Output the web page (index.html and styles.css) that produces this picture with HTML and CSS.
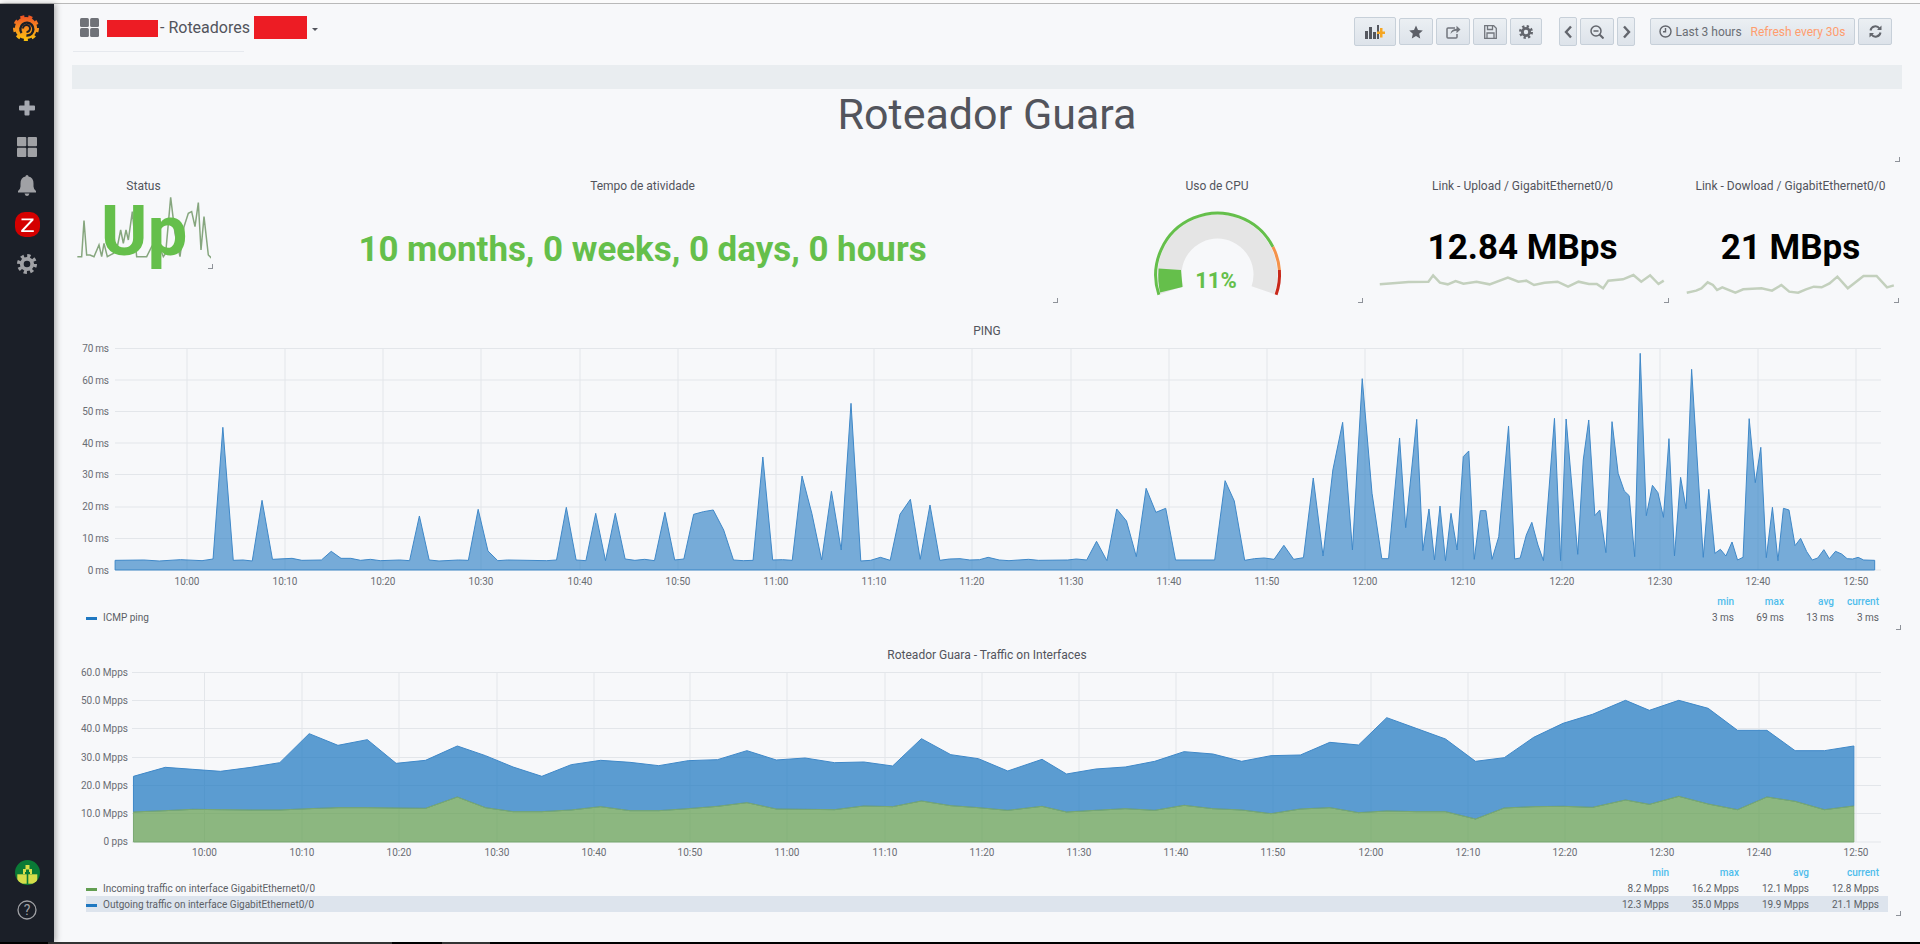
FILE: index.html
```html
<!DOCTYPE html>
<html lang="pt">
<head>
    <meta charset="UTF-8">
    <title>Roteadores - Grafana</title>
    <link rel="stylesheet" href="styles.css">
</head>
<body>

<div class="topline"></div>

<div class="layout">
    <!-- Menu lateral -->
    <aside class="sidemenu">
        <div class="side-logo">
            <svg width="26" height="28" viewBox="0 0 26 28">
                <defs>
                    <linearGradient id="logo-grad" gradientUnits="userSpaceOnUse" x1="0" y1="0" x2="0" y2="28">
                        <stop offset="0" stop-color="#ef4b26"/>
                        <stop offset=".55" stop-color="#f7931e"/>
                        <stop offset="1" stop-color="#fcc80c"/>
                    </linearGradient>
                    <clipPath id="avatar-clip"><circle cx="12.500" cy="12.500" r="12.500"/></clipPath>
                </defs>
                <circle cx="13" cy="14" r="11" fill="url(#logo-grad)"/>
                <circle cx="13" cy="14" r="11.500" fill="none" stroke="url(#logo-grad)" stroke-width="3" stroke-dasharray="4 4.030"/>
                <path d="M8.600 19a6.500 6.500 0 1 1 9.800 .8a6.500 6.500 0 0 1-5 1.700" fill="none" stroke="#1b1f28" stroke-width="2.400"/>
                <path d="M10 14.500a3.500 3.500 0 1 1 3.500 3.500" fill="none" stroke="#1b1f28" stroke-width="2"/>
            </svg>
        </div>
        <div class="side-item">
            <svg width="18" height="16" viewBox="0 0 18 16"><path d="M6.500 1.500q0-1 1-1h3q1 0 1 1v4h4.500q1 0 1 1v3q0 1-1 1h-4.500v4q0 1-1 1h-3q-1 0-1-1v-4h-4.500q-1 0-1-1v-3q0-1 1-1h4.500z" fill="#a5a8b0"/></svg>
        </div>
        <div class="side-item">
            <svg width="20" height="20" viewBox="0 0 20 20" fill="#a0a1a5"><rect x="0" y="0" width="9.300" height="9.300" rx="1"/><rect x="10.700" y="0" width="9.300" height="9.300" rx="1"/><rect x="0" y="10.700" width="9.300" height="9.300" rx="1"/><rect x="10.700" y="10.700" width="9.300" height="9.300" rx="1"/></svg>
        </div>
        <div class="side-item">
            <svg width="18" height="21" viewBox="0 0 18 21" fill="#a0a1a5"><path d="M9 0q1.500 0 1.500 1.500q5 1 5 7v3q0 2.500 2.500 4.500v1.500h-18v-1.500q2.500-2 2.500-4.500v-3q0-6 5-7q0-1.500 1.500-1.500z"/><path d="M6.500 18.500h5q-.8 2.500-2.500 2.500t-2.500-2.500z"/></svg>
        </div>
        <div class="side-item">
            <svg width="25" height="25" viewBox="0 0 25 25"><rect width="25" height="25" rx="10" fill="#d40000"/><path d="M6.500 6.500h12v1.700l-9.500 10h9.800v1.800h-12.600v-1.700l9.500-10h-9.200z" fill="#fff"/></svg>
        </div>
        <div class="side-item">
            <svg width="20" height="20" viewBox="0 0 20 20" fill="none" stroke="#a0a1a5"><circle cx="10" cy="10" r="5.200" stroke-width="3.800"/><circle cx="10" cy="10" r="8" stroke-width="4" stroke-dasharray="3.140 3.140"/></svg>
        </div>
        <div class="side-bottom">
            <div class="side-item">
                <svg width="25" height="25" viewBox="0 0 25 25">
                    <circle cx="12.500" cy="12.500" r="12.500" fill="#0a7a36"/>
                    <g clip-path="url(#avatar-clip)">
                        <path d="M10.500 5h4v4h2.500v5h-2v-2h-5v2h-2v-5h2.500z" fill="#d6dd4a"/>
                        <rect x="11" y="9.500" width="3" height="2.500" fill="#0a7a36"/>
                        <rect x="2.300" y="14.300" width="9.400" height="9.400" fill="#d6dd4a"/>
                        <rect x="13.300" y="14.300" width="9" height="9.400" fill="#d6dd4a"/>
                    </g>
                </svg>
            </div>
            <div class="side-item">
                <svg width="20" height="20" viewBox="0 0 20 20"><circle cx="10" cy="10" r="9" fill="none" stroke="#a0a1a5" stroke-width="1.300"/><text x="10" y="14.500" class="help-mark">?</text></svg>
            </div>
        </div>
    </aside>

    <main class="main">
        <!-- Barra superior -->
        <header class="navbar">
            <div class="nav-title">
                <svg class="nav-icon" width="19" height="19" viewBox="0 0 19 19" fill="#6f7278"><rect width="8.900" height="8.900" rx="1.500"/><rect x="10.100" width="8.900" height="8.900" rx="1.500"/><rect y="10.100" width="8.900" height="8.900" rx="1.500"/><rect x="10.100" y="10.100" width="8.900" height="8.900" rx="1.500"/></svg>
                <span class="redact redact-a"></span>
                <span class="nav-text">- Roteadores</span>
                <span class="redact redact-b"></span>
                <span class="nav-caret"></span>
            </div>
            <div class="toolbar">
                <button class="btn btn-add">
                    <svg width="20" height="14" viewBox="0 0 20 14"><g fill="#55585f"><rect x="0" y="6" width="3" height="8"/><rect x="4" y="2" width="3" height="12"/><rect x="8" y="7" width="3" height="7"/><rect x="12" y="0" width="2" height="14"/></g><path d="M15 3h2.500v3.500h3v2.500h-3v3.500h-2.500v-3.500h-3v-2.500h3z" fill="#f5a623"/></svg>
                </button>
                <button class="btn btn-sq">
                    <svg width="14" height="14" viewBox="0 0 14 14"><path d="M7 .5l2 4.500 4.800.5-3.600 3.200 1 4.800-4.200-2.500-4.200 2.500 1-4.800-3.600-3.200 4.800-.5z" fill="#5d6068"/></svg>
                </button>
                <button class="btn btn-sq">
                    <svg width="15" height="14" viewBox="0 0 15 14" fill="none" stroke="#72767d" stroke-width="1.500"><path d="M9 3h-7q-1 0-1 1v8q0 1 1 1h8q1 0 1-1v-3"/><path d="M4.500 9q.5-5 6-5.200v-3l4 3.700-4 3.700v-2.500q-3.500 0-6 3.300z" fill="#72767d" stroke="none"/></svg>
                </button>
                <button class="btn btn-sq">
                    <svg width="13" height="14" viewBox="0 0 13 14" fill="none" stroke="#72767d" stroke-width="1.300"><path d="M.7.700h9l2.600 2.600v10h-11.600z"/><path d="M3.500 1v3.500h5v-3.500"/><path d="M3 13v-5h7v5"/></svg>
                </button>
                <button class="btn btn-sq btn-gear">
                    <svg width="14" height="14" viewBox="0 0 20 20" fill="none" stroke="#63666d"><circle cx="10" cy="10" r="5.200" stroke-width="4"/><circle cx="10" cy="10" r="8" stroke-width="4" stroke-dasharray="3.140 3.140"/></svg>
                </button>
                <button class="btn btn-arrow">
                    <svg width="9" height="14" viewBox="0 0 9 14"><path d="M7 1.500l-5 5.500 5 5.500" fill="none" stroke="#63666d" stroke-width="2.400"/></svg>
                </button>
                <button class="btn btn-sq">
                    <svg width="14" height="14" viewBox="0 0 14 14" fill="none" stroke="#63666d" stroke-width="1.500"><circle cx="6" cy="6" r="5"/><path d="M9.500 9.500l4 4" stroke-width="2"/><path d="M3.500 6h5"/></svg>
                </button>
                <button class="btn btn-arrow btn-next">
                    <svg width="9" height="14" viewBox="0 0 9 14"><path d="M2 1.500l5 5.500-5 5.500" fill="none" stroke="#63666d" stroke-width="2.400"/></svg>
                </button>
                <button class="btn btn-time">
                    <svg width="13" height="13" viewBox="0 0 13 13" fill="none" stroke="#63666d" stroke-width="1.400"><circle cx="6.500" cy="6.500" r="5.500"/><path d="M6.500 3v3.800h-2.500"/></svg>
                    <span class="time-range">Last 3 hours</span>
                    <span class="time-refresh">Refresh every 30s</span>
                </button>
                <button class="btn btn-sq btn-refresh">
                    <svg width="13" height="13" viewBox="0 0 13 13" fill="none" stroke="#63666d" stroke-width="2"><path d="M1.500 5.500a5 5 0 0 1 9-2"/><path d="M11.500 7.500a5 5 0 0 1-9 2"/><path d="M12.500 .5v4.500h-4.500z" fill="#63666d" stroke="none"/><path d="M.5 12.500v-4.500h4.500z" fill="#63666d" stroke="none"/></svg>
                </button>
            </div>
        </header>

        <div class="row-bar"></div>

        <div class="title-panel">
            <h1>Roteador Guara</h1>
            <span class="handle"></span>
        </div>

        <!-- Paineis de status -->
        <section class="stats">
            <div class="stat stat-status">
                <svg class="spark" viewBox="76 176 135 127">
                    <g transform="scale(.33333)">
                        <polyline class="spark-line spark-status" points="232,770 245,770 252,662 260,765 270,765 282,770 297,735 305,770 312,730 322,770 340,760 352,740 362,690 370,730 378,690 385,720 397,635 410,770 440,770 455,740 470,720 490,770 497,760 512,592 525,700 540,770 552,680 565,640 575,635 585,680 595,608 603,750 612,650 625,765 635,775"/>
                    </g>
                </svg>
                <div class="stat-title">Status</div>
                <div class="stat-up">Up</div>
                <span class="handle"></span>
            </div>
            <div class="stat stat-uptime">
                <div class="stat-title">Tempo de atividade</div>
                <div class="stat-value green">10 months, 0 weeks, 0 days, 0 hours</div>
                <span class="handle"></span>
            </div>
            <div class="stat stat-cpu">
                <div class="stat-title">Uso de CPU</div>
                <svg class="gauge" width="135" height="95" viewBox="1150 205 135 95">
                    <path d="M1172.100 290.200A48 48 0 1 1 1262.900 290.200" fill="none" stroke="#e5e5e5" stroke-width="24"/>
                    <path d="M1158.900 294.800A62 62 0 0 1 1272.900 246.900" fill="none" stroke="#65bf4b" stroke-width="3"/>
                    <path d="M1272.900 246.900A62 62 0 0 1 1279.400 270" fill="none" stroke="#f4924a" stroke-width="3"/>
                    <path d="M1279.400 270A62 62 0 0 1 1276.100 294.800" fill="none" stroke="#c8281a" stroke-width="3"/>
                    <path d="M1160 292.500L1182.500 287L1181 270L1158.600 268.500Q1157.500 281 1160 292.500z" fill="#65bf4b"/>
                    <text x="1216" y="288" class="gauge-text">11%</text>
                </svg>
                <span class="handle"></span>
            </div>
            <div class="stat stat-upload">
                <svg class="spark" viewBox="1379 176 287 127">
                    <g transform="translate(1100 170) scale(.52295 .33333)">
                        <polyline class="spark-line" points="535,343 560,340 590,336 628,335 637,316 650,338 665,343 680,333 695,341 720,335 745,343 780,323 800,335 815,332 830,345 850,338 875,335 895,350 915,335 935,342 950,342 962,355 972,332 1000,328 1020,315 1035,335 1052,316 1068,342 1078,332"/>
                    </g>
                </svg>
                <div class="stat-title">Link - Upload / GigabitEthernet0/0</div>
                <div class="stat-value black">12.84 MBps</div>
                <span class="handle"></span>
            </div>
            <div class="stat stat-download">
                <svg class="spark" viewBox="1685 176 211 127">
                    <g transform="translate(1100 170) scale(.52295 .33333)">
                        <polyline class="spark-line" points="1122,368 1140,362 1150,355 1162,337 1172,345 1180,360 1190,352 1215,368 1230,358 1265,355 1285,362 1303,345 1318,365 1335,368 1350,358 1365,350 1380,352 1395,340 1410,320 1430,355 1460,318 1485,318 1505,352 1518,346"/>
                    </g>
                </svg>
                <div class="stat-title">Link - Dowload / GigabitEthernet0/0</div>
                <div class="stat-value black">21 MBps</div>
                <span class="handle"></span>
            </div>
        </section>

        <!-- Grafico de ping -->
        <section class="graph graph-ping">
            <div class="graph-title">PING</div>
            <svg class="chart" width="1822" height="252" viewBox="76 340 1822 252">
                <g class="grid">
                    <path d="M115 348.500H1881M115 380H1881M115 411.500H1881M115 443H1881M115 474.500H1881M115 507H1881M115 538.500H1881M115 570H1881"/>
                    <path d="M187 348V570M285 348V570M383 348V570M481 348V570M580 348V570M678 348V570M776 348V570M874 348V570M972 348V570M1071 348V570M1169 348V570M1267 348V570M1365 348V570M1463 348V570M1562 348V570M1660 348V570M1758 348V570M1856 348V570"/>
                </g>
                <g transform="translate(0 320) scale(.61224 .33333)">
                    <polygon class="area-ping" points="188,750 188,721 235,720 260,723 295,719 330,722 348,717 364,322 381,721 397,720 412,723 428,541 445,718 477,715 493,721 525,720 541,694 557,715 573,715 589,721 605,718 621,722 653,720 669,722 685,588 701,720 717,723 749,720 765,721 781,568 797,693 813,722 829,720 893,722 909,720 925,562 941,720 957,722 973,580 989,722 1005,580 1021,717 1037,721 1053,718 1069,722 1086,577 1102,720 1117,717 1133,583 1149,575 1165,570 1182,630 1198,720 1214,722 1230,721 1246,411 1262,720 1278,719 1294,721 1310,468 1326,580 1342,720 1358,514 1374,690 1390,250 1406,723 1422,721 1438,712 1454,721 1470,583 1487,538 1503,718 1519,555 1535,721 1551,717 1568,716 1584,720 1600,719 1614,712 1632,720 1648,722 1680,718 1696,721 1744,720 1758,717 1775,720 1791,664 1808,722 1824,567 1840,603 1856,710 1872,505 1888,577 1904,565 1920,720 1984,720 2001,482 2016,543 2033,721 2049,716 2065,714 2081,718 2097,676 2113,718 2129,713 2145,474 2161,708 2177,450 2193,307 2209,690 2225,176 2241,520 2257,716 2268,716 2286,354 2296,623 2314,298 2324,692 2334,567 2343,720 2352,558 2361,722 2370,580 2380,690 2390,410 2399,393 2408,718 2418,572 2427,572 2437,718 2448,650 2464,318 2474,717 2483,714 2493,645 2502,607 2512,675 2521,722 2539,295 2549,722 2558,297 2577,703 2586,420 2595,300 2605,587 2613,570 2623,698 2633,305 2643,460 2653,513 2661,527 2670,710 2679,100 2689,587 2699,496 2708,518 2717,592 2726,356 2735,708 2745,472 2754,566 2763,148 2782,712 2791,508 2801,700 2810,688 2819,708 2829,666 2838,720 2847,712 2857,296 2867,488 2876,382 2885,713 2895,562 2904,722 2913,565 2922,570 2932,677 2941,655 2951,695 2960,720 2969,714 2979,689 2988,716 2998,694 3008,702 3017,716 3026,717 3035,712 3044,720 3062,721 3062,750"/>
                </g>
                <g class="y-labels">
                    <text x="108.500" y="352">70 ms</text>
                    <text x="108.500" y="383.500">60 ms</text>
                    <text x="108.500" y="415">50 ms</text>
                    <text x="108.500" y="446.500">40 ms</text>
                    <text x="108.500" y="478">30 ms</text>
                    <text x="108.500" y="510">20 ms</text>
                    <text x="108.500" y="542">10 ms</text>
                    <text x="108.500" y="573.500">0 ms</text>
                </g>
                <g class="x-labels">
                    <text x="187" y="585">10:00</text><text x="285" y="585">10:10</text><text x="383" y="585">10:20</text><text x="481" y="585">10:30</text><text x="580" y="585">10:40</text><text x="678" y="585">10:50</text><text x="776" y="585">11:00</text><text x="874" y="585">11:10</text><text x="972" y="585">11:20</text><text x="1071" y="585">11:30</text><text x="1169" y="585">11:40</text><text x="1267" y="585">11:50</text><text x="1365" y="585">12:00</text><text x="1463" y="585">12:10</text><text x="1562" y="585">12:20</text><text x="1660" y="585">12:30</text><text x="1758" y="585">12:40</text><text x="1856" y="585">12:50</text>
                </g>
            </svg>
            <div class="legend">
                <div class="legend-row legend-head">
                    <span class="legend-name"></span>
                    <span class="val">min</span><span class="val">max</span><span class="val">avg</span><span class="val">current</span>
                </div>
                <div class="legend-row">
                    <i class="swatch swatch-blue"></i>
                    <span class="legend-name">ICMP ping</span>
                    <span class="val">3 ms</span><span class="val">69 ms</span><span class="val">13 ms</span><span class="val">3 ms</span>
                </div>
            </div>
            <span class="handle"></span>
        </section>

        <!-- Grafico de trafego -->
        <section class="graph graph-traffic">
            <div class="graph-title">Roteador Guara - Traffic on Interfaces</div>
            <svg class="chart" width="1822" height="200" viewBox="76 664 1822 200">
                <g class="grid">
                    <path d="M132 672.500H1881M132 700.500H1881M132 728.500H1881M132 757.500H1881M132 785.500H1881M132 813.500H1881M132 842H1881"/>
                    <path d="M204.500 672V842M302 672V842M399 672V842M497 672V842M594 672V842M690 672V842M787 672V842M885 672V842M982 672V842M1079 672V842M1176 672V842M1273 672V842M1371 672V842M1468 672V842M1565 672V842M1662 672V842M1759 672V842M1856 672V842"/>
                </g>
                <g transform="translate(0 640) scale(.61224 .33333)">
                    <polygon class="area-out" points="218,409 270,382 315,388 360,394 410,382 457,368 505,281 552,316 600,299 647,370 695,361 747,318 793,347 838,381 885,409 933,374 981,361 1029,367 1076,377 1124,362 1172,359 1220,332 1268,360 1315,354 1363,368 1411,366 1458,378 1505,296 1553,344 1598,356 1646,393 1702,358 1742,402 1790,387 1838,381 1886,364 1934,335 1981,342 2028,364 2076,347 2124,345 2172,307 2219,315 2265,233 2313,265 2361,297 2410,364 2457,353 2505,292 2553,250 2601,223 2655,181 2694,211 2742,181 2790,205 2838,271 2886,271 2932,332 2980,332 3028,318 3028,498 2980,509 2932,484 2886,471 2838,509 2790,492 2742,469 2694,493 2655,480 2601,502 2553,499 2505,500 2457,504 2410,537 2361,515 2313,515 2265,513 2219,518 2172,503 2124,507 2076,521 2028,510 1981,506 1934,496 1886,511 1838,506 1790,511 1742,516 1702,499 1646,511 1598,503 1553,497 1505,483 1458,500 1411,498 1363,509 1315,508 1268,507 1220,488 1172,499 1124,506 1076,512 1029,512 981,500 933,510 885,515 838,515 793,503 747,471 695,505 647,504 600,503 552,503 505,506 457,510 410,510 360,509 315,508 270,512 218,516"/>
                    <polygon class="area-in" points="218,606 218,516 270,512 315,508 360,509 410,510 457,510 505,506 552,503 600,503 647,504 695,505 747,471 793,503 838,515 885,515 933,510 981,500 1029,512 1076,512 1124,506 1172,499 1220,488 1268,507 1315,508 1363,509 1411,498 1458,500 1505,483 1553,497 1598,503 1646,511 1702,499 1742,516 1790,511 1838,506 1886,511 1934,496 1981,506 2028,510 2076,521 2124,507 2172,503 2219,518 2265,513 2313,515 2361,515 2410,537 2457,504 2505,500 2553,499 2601,502 2655,480 2694,493 2742,469 2790,492 2838,509 2886,471 2932,484 2980,509 3028,498 3028,606"/>
                </g>
                <g class="y-labels">
                    <text x="128" y="675.500">60.0 Mpps</text>
                    <text x="128" y="703.500">50.0 Mpps</text>
                    <text x="128" y="731.500">40.0 Mpps</text>
                    <text x="128" y="760.500">30.0 Mpps</text>
                    <text x="128" y="788.500">20.0 Mpps</text>
                    <text x="128" y="817">10.0 Mpps</text>
                    <text x="128" y="845">0 pps</text>
                </g>
                <g class="x-labels">
                    <text x="204.500" y="855.500">10:00</text><text x="302" y="855.500">10:10</text><text x="399" y="855.500">10:20</text><text x="497" y="855.500">10:30</text><text x="594" y="855.500">10:40</text><text x="690" y="855.500">10:50</text><text x="787" y="855.500">11:00</text><text x="885" y="855.500">11:10</text><text x="982" y="855.500">11:20</text><text x="1079" y="855.500">11:30</text><text x="1176" y="855.500">11:40</text><text x="1273" y="855.500">11:50</text><text x="1371" y="855.500">12:00</text><text x="1468" y="855.500">12:10</text><text x="1565" y="855.500">12:20</text><text x="1662" y="855.500">12:30</text><text x="1759" y="855.500">12:40</text><text x="1856" y="855.500">12:50</text>
                </g>
            </svg>
            <div class="legend">
                <div class="legend-row legend-head">
                    <span class="legend-name"></span>
                    <span class="val">min</span><span class="val">max</span><span class="val">avg</span><span class="val">current</span>
                </div>
                <div class="legend-row">
                    <i class="swatch swatch-green"></i>
                    <span class="legend-name">Incoming traffic on interface GigabitEthernet0/0</span>
                    <span class="val">8.2 Mpps</span><span class="val">16.2 Mpps</span><span class="val">12.1 Mpps</span><span class="val">12.8 Mpps</span>
                </div>
                <div class="legend-row legend-active">
                    <i class="swatch swatch-blue"></i>
                    <span class="legend-name">Outgoing traffic on interface GigabitEthernet0/0</span>
                    <span class="val">12.3 Mpps</span><span class="val">35.0 Mpps</span><span class="val">19.9 Mpps</span><span class="val">21.1 Mpps</span>
                </div>
            </div>
            <span class="handle"></span>
        </section>
    </main>
</div>

<div class="taskbar"></div>

</body>
</html>
```

FILE: styles.css
```css
* { box-sizing: border-box; }
html, body { margin: 0; height: 100%; overflow: hidden; }
body { font-family: Roboto, "Liberation Sans", sans-serif; background: #f7f8fa; color: #52545c; }

.topline { height: 4px; background: #fbfbfb; border-bottom: 1px solid #b9b9b9; }
.layout { display: flex; height: 938px; }
.taskbar { height: 2px; background: linear-gradient(to right, #000 48px, #333 48px, #333 392px, #000 392px, #000 442px, #333 442px, #333 490px, #000 490px); }

/* menu lateral */
.sidemenu { width: 54px; flex: none; background: #1b1f28; box-shadow: 2px 0 6px rgba(0, 0, 0, 0.3); display: flex; flex-direction: column; align-items: center; padding-bottom: 13px; position: relative; z-index: 1; }
.side-logo { height: 48px; margin-bottom: 36px; display: flex; align-items: center; padding-right: 2px; }
.side-item { height: 39px; width: 54px; display: flex; align-items: center; justify-content: center; }
.side-bottom { margin-top: auto; }
.side-bottom .side-item { height: 38px; }
.help-mark { font-size: 14px; fill: #a0a1a5; text-anchor: middle; }

.main { flex: 1; min-width: 0; }

/* barra superior */
.navbar { display: flex; height: 61px; padding: 0 28px 0 19px; position: relative; }
.nav-title { display: flex; align-items: center; height: 48px; width: 171px; padding-left: 7px; border-bottom: 1px solid #e6e9ee; white-space: nowrap; }
.nav-icon { flex: none; }
.nav-text { font-size: 16px; color: #52545c; margin: 0 4px 0 2px; }
.redact { display: inline-block; background: #ed1c24; flex: none; }
.redact-a { width: 51px; height: 17px; margin: 2px 0 0 8px; }
.redact-b { width: 53px; height: 23px; }
.nav-caret { width: 0; height: 0; flex: none; margin: 3px 0 0 5px; border: 3px solid transparent; border-top: 3px solid #52545c; border-bottom: 0; }

.toolbar { margin-left: auto; height: 55px; display: flex; align-items: center; }
.btn { height: 27px; padding: 0; flex: none; display: flex; align-items: center; justify-content: center; margin-right: 3px; border: 1px solid #c7d0d9; border-radius: 2px; background: linear-gradient(to bottom, #ebeff3, #dde3ea); font-family: inherit; }
.btn-add { width: 42px; height: 29px; }
.btn-sq { width: 34px; }
.btn-gear { width: 32px; margin-right: 17px; }
.btn-arrow { width: 18px; height: 29px; }
.btn-next { margin-right: 15px; }
.btn-time { width: 205px; font-size: 12px; }
.btn-refresh { margin-right: 0; }
.time-range { margin-left: 3px; color: #6b6e75; }
.time-refresh { margin-left: 9px; color: #ff9d6e; }

.row-bar { height: 24px; margin: 0 18px; background: #e9edf0; }

.title-panel { height: 73px; margin: 0 18px; position: relative; }
.title-panel h1 { margin: 0; padding-top: 1px; font-size: 43px; line-height: 48px; font-weight: 400; text-align: center; color: #52545c; }
.title-panel .handle { right: 2px; bottom: 0; }

/* canto de redimensionar */
.handle { position: absolute; right: -3px; bottom: 0; width: 5px; height: 5px; border-right: 1px solid #8e9299; border-bottom: 1px solid #8e9299; }

/* paineis de status */
.stats { display: flex; gap: 19px; height: 127px; margin: 14px 0 19px 22px; }
.stat { position: relative; height: 127px; padding-top: 3px; text-align: center; }
.stat-status { width: 135px; }
.stat-status .handle { bottom: 34px; right: -2px; }
.stat-uptime { width: 825px; }
.stat-uptime .stat-value { font-size: 34.900px; margin-top: 37px; }
.stat-cpu { width: 286px; }
.stat-upload { width: 287px; }
.stat-download { width: 211px; }
.stat-title { font-size: 12px; line-height: 14px; color: #52545c; position: relative; }
.stat-value { font-size: 35px; line-height: 40px; font-weight: 700; margin-top: 35px; white-space: nowrap; position: relative; }
.stat-up { font-size: 71px; line-height: 60px; font-weight: 700; color: #65bf4b; margin: 8px 0 0 1px; position: relative; }
.green { color: #65bf4b; }
.black { color: #000; }
.spark { position: absolute; left: 0; top: 0; width: 100%; height: 127px; }
.spark-line { fill: none; stroke: #c3d0bd; stroke-width: 2.500; vector-effect: non-scaling-stroke; }
.spark-status { stroke: #86a67e; stroke-width: 1.500; }
.gauge { display: block; margin: 12px auto 0; }
.gauge-text { font-size: 22px; font-weight: 700; fill: #65bf4b; text-anchor: middle; }

/* graficos */
.graph { position: relative; margin: 0 22px; }
.graph-ping { height: 308px; margin-bottom: 16px; }
.graph-traffic { height: 270px; }
.graph-title { height: 18px; padding-top: 1px; font-size: 12px; line-height: 16px; font-weight: 400; text-align: center; color: #52545c; }
.chart { display: block; }
.graph-ping .chart { margin-bottom: 1px; }
.grid path { fill: none; stroke: #e3e6ea; stroke-width: 1; }
.area-ping { fill: rgba(31, 120, 193, 0.6); stroke: #3f88c8; stroke-width: 1; vector-effect: non-scaling-stroke; }
.area-out { fill: rgba(31, 120, 193, 0.72); stroke: #3f88c8; stroke-width: 1; vector-effect: non-scaling-stroke; }
.area-in { fill: rgba(98, 158, 81, 0.72); stroke: #7aa872; stroke-width: 1; vector-effect: non-scaling-stroke; }
.y-labels text { font-size: 10px; fill: #6a6d74; text-anchor: end; }
.graph-ping .y-labels text { letter-spacing: -0.3px; }
.x-labels text { font-size: 10px; fill: #6a6d74; text-anchor: middle; }

/* legenda */
.legend { margin: 0 10px; font-size: 10px; }
.legend-row { display: flex; align-items: center; height: 16px; padding-right: 9px; color: #5c5f66; }
.legend-head { color: #4fbdec; font-weight: 500; }
.legend-active { background: #dde4ed; }
.legend-name { flex: 1; }
.swatch { width: 11px; height: 3px; margin: 2px 6px 0 0; flex: none; }
.swatch-blue { background: #1f78c1; }
.swatch-green { background: #629e51; }
.val { text-align: right; width: 70px; flex: none; }
.graph-ping .val { width: 50px; }
.graph-ping .val:last-child { width: 45px; }
```
